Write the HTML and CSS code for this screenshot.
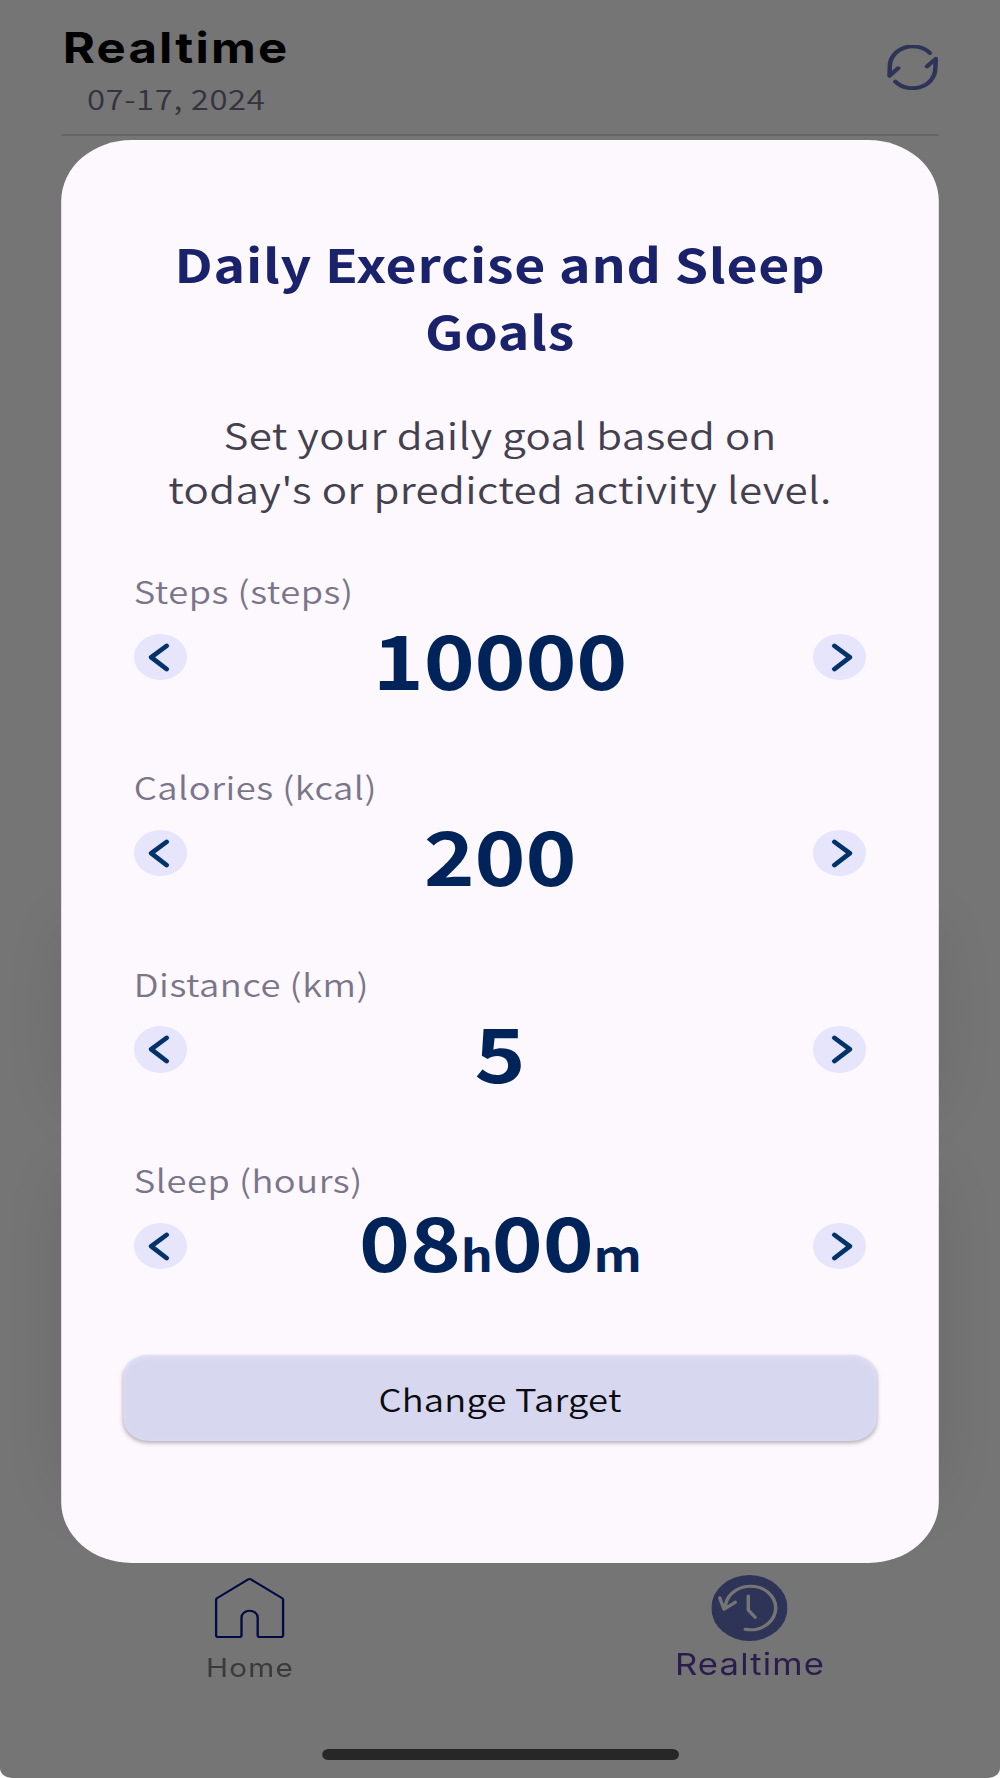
FILE: index.html
```html
<!DOCTYPE html>
<html lang="en">
<head>
<meta charset="utf-8">
<title>Realtime</title>
<link rel="stylesheet" href="styles.css">
</head>
<body>
<div class="screen">
  <header class="header">
    <div>
      <h1 class="header-title">Realtime</h1>
      <p class="header-date">07-17, 2024</p>
    </div>
    <svg class="refresh" viewBox="0 0 45 45"><path d="M37.2 8A19.8 19.8 0 0 0 2.6 21L2.3 30.8L9.8 23.2M7.4 36.6A19.8 19.8 0 0 0 42 23.6L42.4 13.8L34.8 21.4"/></svg>
  </header>
  <main class="cards">
    <div class="card"></div>
    <div class="card card-tall"></div>
  </main>
  <nav class="nav">
    <a class="nav-item">
      <svg class="home-icon" viewBox="0 0 60 60"><path d="M28.8 1.4Q30 .7 31.2 1.4L58.3 20.2Q59 20.8 59 22V57.2Q59 59 57.2 59H38.8Q37 59 37 57.2V39.5A7 6.8 0 0 0 23 39.5V57.2Q23 59 21.2 59H2.8Q1 59 1 57.2V22Q1 20.8 1.7 20.2Z"/></svg>
      <span class="nav-label">Home</span>
    </a>
    <a class="nav-item nav-item-active">
      <svg class="clock-icon" viewBox="0 0 66 66"><circle cx="33" cy="33" r="33"/><path d="M29.4 54.3A21.8 21.8 0 1 0 12.4 29.5L11 34M7.3 22.8L11 34.2L20.8 27.2M32 21V35L38 42.4"/></svg>
      <span class="nav-label">Realtime</span>
    </a>
  </nav>
  <div class="home-indicator"></div>

  <section class="modal">
    <h2 class="modal-title">Daily Exercise and Sleep<br>Goals</h2>
    <p class="modal-text">Set your daily goal based on<br>today's or predicted activity level.</p>
    <div class="goals">
      <div class="goal">
        <div class="goal-label">Steps (steps)</div>
        <div class="goal-row">
          <button class="step"><svg viewBox="0 0 46 46"><path d="M28 11.7L14.8 23L28 34.7"/></svg></button>
          <span class="goal-value">10000</span>
          <button class="step"><svg viewBox="0 0 46 46"><path d="M18.4 11.7L31.6 23L18.4 34.7"/></svg></button>
        </div>
      </div>
      <div class="goal">
        <div class="goal-label">Calories (kcal)</div>
        <div class="goal-row">
          <button class="step"><svg viewBox="0 0 46 46"><path d="M28 11.7L14.8 23L28 34.7"/></svg></button>
          <span class="goal-value">200</span>
          <button class="step"><svg viewBox="0 0 46 46"><path d="M18.4 11.7L31.6 23L18.4 34.7"/></svg></button>
        </div>
      </div>
      <div class="goal">
        <div class="goal-label">Distance (km)</div>
        <div class="goal-row">
          <button class="step"><svg viewBox="0 0 46 46"><path d="M28 11.7L14.8 23L28 34.7"/></svg></button>
          <span class="goal-value">5</span>
          <button class="step"><svg viewBox="0 0 46 46"><path d="M18.4 11.7L31.6 23L18.4 34.7"/></svg></button>
        </div>
      </div>
      <div class="goal">
        <div class="goal-label">Sleep (hours)</div>
        <div class="goal-row">
          <button class="step"><svg viewBox="0 0 46 46"><path d="M28 11.7L14.8 23L28 34.7"/></svg></button>
          <span class="goal-value goal-time">08<small>h</small>00<small>m</small></span>
          <button class="step"><svg viewBox="0 0 46 46"><path d="M18.4 11.7L31.6 23L18.4 34.7"/></svg></button>
        </div>
      </div>
    </div>
    <button class="submit">Change Target</button>
  </section>
</div>
</body>
</html>
```
FILE: styles.css
```css
* { box-sizing: border-box; margin: 0; padding: 0; }
html, body { width: 1000px; height: 1778px; overflow: hidden; background: #fff; }
button { border: 0; background: none; font: inherit; }
svg { display: block; fill: none; stroke-linecap: round; stroke-linejoin: round; }

/* The layout is 866 units wide and is widened to fill the viewport. */
.screen {
  position: relative;
  display: flex;
  flex-direction: column;
  width: 866px;
  height: 1778px;
  background: #757575;
  border-radius: 0 0 10px 10px;
  overflow: hidden;
  transform: scaleX(1.15473);
  transform-origin: 0 0;
  font-family: "Noto Sans CJK JP", "Noto Sans CJK SC", sans-serif;
  font-weight: 350;
}

.header {
  display: flex;
  justify-content: space-between;
  height: 136px;
  margin: 0 53.3px;
  padding-top: 23px;
  border-bottom: 2px solid #666;
}
.header-title {
  padding-left: 1px;
  font: 700 42.5px/50px Inter, sans-serif;
  letter-spacing: 1.9px;
  color: #000;
}
.header-date {
  padding-left: 22px;
  margin-top: 5px;
  font-size: 28.5px;
  line-height: 40px;
  letter-spacing: .5px;
  color: #34333f;
}
.refresh { width: 45px; height: 45px; margin-top: 21.6px; stroke: #2e3358; stroke-width: 3.9; }

.cards {
  flex: 1;
  display: flex;
  flex-direction: column;
  justify-content: flex-end;
  gap: 60px;
  padding: 0 58px 76px;
  overflow: hidden;
}
.card { height: 190px; border-radius: 30px; box-shadow: 0 0 60px rgba(0, 0, 0, .1); }
.card-tall { height: 330px; }

.nav { display: flex; height: 174px; }
.nav-item { flex: 1; display: flex; flex-direction: column; align-items: center; font-family: Inter, sans-serif; font-weight: 400; font-size: 25.7px; color: #3a3a3a; }
.home-icon { width: 60.3px; height: 60px; margin-top: 3.2px; stroke: #000a45; stroke-width: 2; }
.clock-icon { width: 66px; height: 66px; margin-right: 1px; stroke: #757575; stroke-width: 3; }
.clock-icon circle { fill: #2e3358; stroke: none; }
.nav-label { margin-top: 13.5px; line-height: 31px; letter-spacing: 1px; }
.nav-item-active { color: #2c1c4e; font-size: 30px; }
.nav-item-active .nav-label { margin-top: 7px; line-height: 32px; }
.home-indicator { width: 309px; height: 11px; margin: 0 auto 18px; border-radius: 6px; background: #272727; }

.modal {
  position: absolute;
  top: 139.5px;
  left: 53.3px;
  display: flex;
  flex-direction: column;
  width: 759.4px;
  height: 1423px;
  padding: 89px 52.5px 0;
  border-radius: 61px;
  background: #fdf8fe;
}
.modal-title { font-size: 46.4px; line-height: 67.2px; font-weight: 700; letter-spacing: .65px; text-align: center; color: #19226a; }
.modal-text { margin-top: 45px; font-size: 36.5px; line-height: 53.6px; letter-spacing: .3px; text-align: center; color: #43404f; }
.goals { margin-top: 53px; padding: 0 10px; }
.goal { height: 196.3px; }
.goal-label { font-size: 31.5px; line-height: 45.6px; letter-spacing: .45px; color: #79758a; }
.goal-row { display: flex; justify-content: space-between; align-items: center; height: 46.5px; margin-top: 20px; }
.step { width: 46.5px; height: 46.5px; border-radius: 50%; background: #e6e5fc; }
.step svg { width: 46.5px; height: 46.5px; stroke: #003369; stroke-width: 4.3; }
.goal-value { padding-top: 3px; font-size: 75px; line-height: 46.5px; font-weight: 700; color: #00235a; letter-spacing: -.2px; }
.goal-time { padding: 0 0 11px; }
.goal-value small { font-size: 43.5px; line-height: 0; letter-spacing: -1px; }
.submit {
  height: 85.5px;
  margin: 1.8px .8px 0;
  border-radius: 22px;
  background: #d7d7ef;
  box-shadow: 0 2px 4px rgba(0, 0, 0, .3), inset 0 2px 4px #e3e1fb;
  font-size: 31.5px;
  letter-spacing: .2px;
  color: #0b0b0f;
}
```
